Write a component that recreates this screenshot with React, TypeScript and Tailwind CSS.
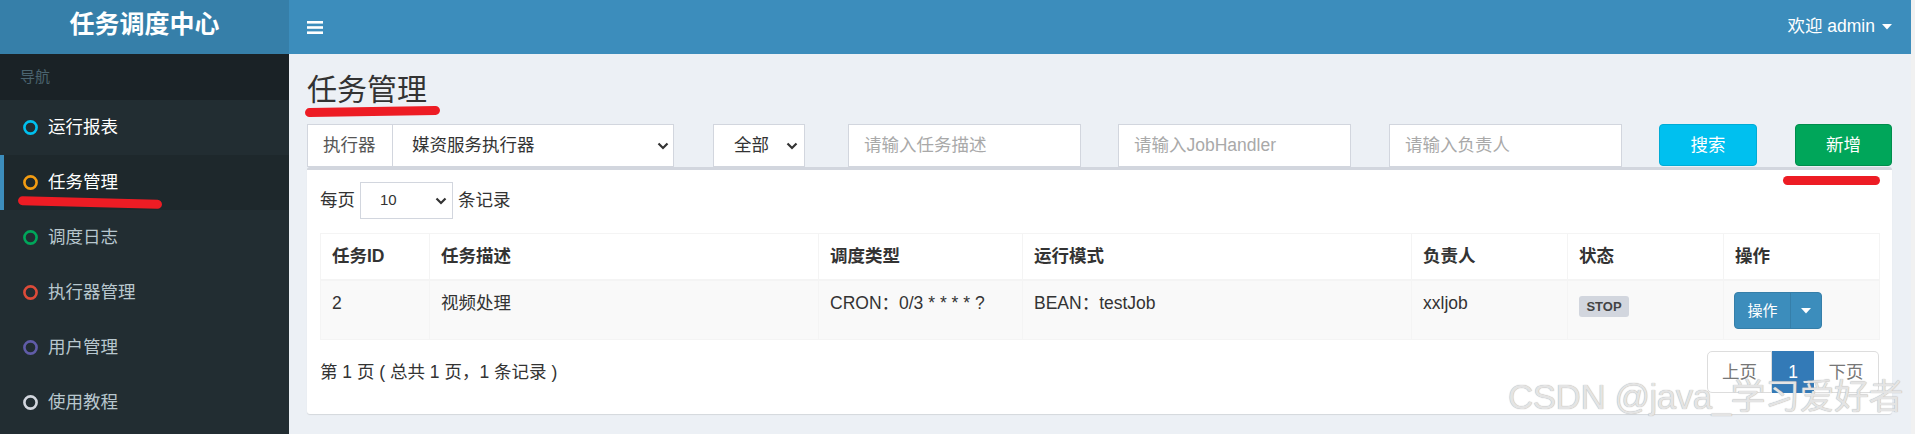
import React from "react";

const FONT = "font-['Liberation_Sans','Noto_Sans_CJK_SC',sans-serif]";

function Circle({ color }: { color: string }) {
  return (
    <svg width="15" height="15" viewBox="0 0 15 15" className="shrink-0">
      <circle cx="7.5" cy="7.5" r="6.1" fill="none" stroke={color} strokeWidth="2.6" />
    </svg>
  );
}

function Chevron() {
  return (
    <svg width="12" height="8" viewBox="0 0 12 8" className="shrink-0">
      <polyline points="1.5,1.5 6,6 10.5,1.5" fill="none" stroke="#333" strokeWidth="2.2" />
    </svg>
  );
}

const menu = [
  { label: "运行报表", color: "#00c0ef", text: "text-white", active: false },
  { label: "任务管理", color: "#f39c12", text: "text-white", active: true },
  { label: "调度日志", color: "#00a65a", text: "text-[#b8c7ce]", active: false },
  { label: "执行器管理", color: "#dd4b39", text: "text-[#b8c7ce]", active: false },
  { label: "用户管理", color: "#605ca8", text: "text-[#b8c7ce]", active: false },
  { label: "使用教程", color: "#d2d6de", text: "text-[#b8c7ce]", active: false },
];

export default function App() {
  return (
    <div className={`relative flex w-[1915px] h-[434px] overflow-hidden ${FONT}`}>
      {/* Sidebar */}
      <aside className="w-[289px] shrink-0 bg-[#222d32] flex flex-col">
        <div className="h-[54px] bg-[#367fa9] flex items-center justify-center pb-[5px] text-white font-bold text-[25px] leading-none">
          任务调度中心
        </div>
        <div className="h-[46px] bg-[#1a2226] text-[#4b646f] text-[15px] pl-[20px] flex items-center">
          导航
        </div>
        {menu.map((m) => (
          <div
            key={m.label}
            className={`h-[55px] flex items-center border-l-4 pl-[19px] ${
              m.active ? "border-[#3c8dbc] bg-[#1e282c]" : "border-transparent"
            }`}
          >
            <Circle color={m.color} />
            <span className={`ml-[10px] text-[17.5px] leading-none ${m.text}`}>{m.label}</span>
          </div>
        ))}
      </aside>

      {/* Main */}
      <div className="w-[1622px] shrink-0 flex flex-col bg-[#ecf0f5]">
        <header className="h-[54px] bg-[#3c8dbc] flex items-center justify-between pl-[18px] pr-[19px]">
          <svg width="16" height="13" viewBox="0 0 16 13">
            <rect x="0" y="0" width="16" height="2.6" fill="#fff" />
            <rect x="0" y="5.2" width="16" height="2.6" fill="#fff" />
            <rect x="0" y="10.4" width="16" height="2.6" fill="#fff" />
          </svg>
          <div className="flex items-center text-white text-[17.5px] leading-none">
            <span>欢迎 admin</span>
            <svg width="10" height="6" viewBox="0 0 10 6" className="ml-[7px]">
              <polygon points="0,0 10,0 5,5.5" fill="#fff" />
            </svg>
          </div>
        </header>

        <div className="pl-[18px] pr-[19px]">
          <h1 className="pt-[19px] text-[30px] leading-[33px] text-[#333] font-normal">任务管理</h1>

          {/* Filter row */}
          <div className="mt-[18px] h-[43px] flex text-[17.5px]">
            <div className="w-[367px] h-full flex">
              <div className="w-[85px] h-full bg-white border border-r-0 border-[#d2d6de] flex items-center pl-[15px] text-[#555]">
                执行器
              </div>
              <div className="flex-1 h-full bg-white border border-[#d2d6de] flex items-center justify-between pl-[19px] pr-[4px] text-[#333]">
                <span>媒资服务执行器</span>
                <Chevron />
              </div>
            </div>
            <div className="ml-[39px] w-[92px] h-full bg-white border border-[#d2d6de] flex items-center justify-between pl-[20px] pr-[6px] text-[#333]">
              <span>全部</span>
              <Chevron />
            </div>
            <div className="ml-[43px] w-[233px] h-full bg-white border border-[#d2d6de] flex items-center pl-[15px] text-[#a9a9a9]">
              请输入任务描述
            </div>
            <div className="ml-[37px] w-[233px] h-full bg-white border border-[#d2d6de] flex items-center pl-[15px] text-[#a9a9a9]">
              请输入JobHandler
            </div>
            <div className="ml-[38px] w-[233px] h-full bg-white border border-[#d2d6de] flex items-center pl-[15px] text-[#a9a9a9]">
              请输入负责人
            </div>
            <div className="ml-[37px] w-[98px] h-[42px] rounded-[4px] bg-[#00c0ef] border border-[#00acd6] flex items-center justify-center text-white">
              搜索
            </div>
            <div className="ml-[38px] w-[97px] h-[42px] rounded-[4px] bg-[#00a65a] border border-[#008d4c] flex items-center justify-center text-white">
              新增
            </div>
          </div>

          {/* Box */}
          <div className="bg-white border-t-[3px] border-[#d2d6de] rounded-[3px] shadow-[0_1px_1px_rgba(0,0,0,0.1)] px-[13px] pt-[12px] pb-[21px] text-[17.5px] text-[#333]">
            <div className="flex items-center h-[37px]">
              <span>每页</span>
              <div className="ml-[5px] w-[93px] h-[37px] border border-[#d2d6de] flex items-center justify-between pl-[19px] pr-[5px] text-[15px]">
                <span>10</span>
                <Chevron />
              </div>
              <span className="ml-[5px]">条记录</span>
            </div>

            <table className="mt-[14px] w-[1559px] table-fixed border-collapse border border-[#f4f4f4]">
              <colgroup>
                <col className="w-[109px]" />
                <col className="w-[389px]" />
                <col className="w-[204px]" />
                <col className="w-[389px]" />
                <col className="w-[156px]" />
                <col className="w-[156px]" />
                <col className="w-[156px]" />
              </colgroup>
              <thead>
                <tr className="bg-white">
                  {["任务ID", "任务描述", "调度类型", "运行模式", "负责人", "状态", "操作"].map((h) => (
                    <th
                      key={h}
                      className="border border-[#f4f4f4] border-b-2 text-left font-bold px-[11px] py-[10px] leading-[25px]"
                    >
                      {h}
                    </th>
                  ))}
                </tr>
              </thead>
              <tbody>
                <tr className="bg-[#f9f9f9]">
                  <td className="border border-[#f4f4f4] align-top px-[11px] py-[10px] leading-[25px]">2</td>
                  <td className="border border-[#f4f4f4] align-top px-[11px] py-[10px] leading-[25px]">视频处理</td>
                  <td className="border border-[#f4f4f4] align-top px-[11px] py-[10px] leading-[25px]">CRON：0/3 * * * * ?</td>
                  <td className="border border-[#f4f4f4] align-top px-[11px] py-[10px] leading-[25px]">BEAN：testJob</td>
                  <td className="border border-[#f4f4f4] align-top px-[11px] py-[10px] leading-[25px]">xxljob</td>
                  <td className="border border-[#f4f4f4] align-top px-[11px] py-[10px] leading-[25px]">
                    <span className="mt-[5px] inline-flex items-center justify-center w-[50px] h-[21px] rounded-[3px] bg-[#d2d6de] text-[#444] text-[13px] font-bold leading-none align-top">
                      STOP
                    </span>
                  </td>
                  <td className="border border-[#f4f4f4] align-top px-[10px] py-[10px] leading-[25px]">
                    <div className="mt-[1px] flex h-[37px] w-[88px] rounded-[4px] overflow-hidden border border-[#367fa9] bg-[#3c8dbc] text-white">
                      <div className="w-[55px] flex items-center justify-center text-[15px] leading-none">操作</div>
                      <div className="flex-1 border-l border-[#367fa9] flex items-center justify-center">
                        <svg width="10" height="6" viewBox="0 0 10 6">
                          <polygon points="0,0 10,0 5,5.5" fill="#fff" />
                        </svg>
                      </div>
                    </div>
                  </td>
                </tr>
              </tbody>
            </table>

            <div className="mt-[11px] flex items-center justify-between">
              <span className="leading-[25px]">第 1 页 ( 总共 1 页，1 条记录 )</span>
              <div className="flex h-[42px]">
                <div className="w-[65px] border border-[#ddd] rounded-l-[5px] flex items-center justify-center text-[#777]">上页</div>
                <div className="w-[42px] bg-[#337ab7] border border-[#337ab7] flex items-center justify-center text-white">1</div>
                <div className="w-[65px] border border-l-0 border-[#ddd] rounded-r-[5px] flex items-center justify-center text-[#777]">下页</div>
              </div>
            </div>
          </div>
        </div>
      </div>

      <div className="w-[4px] shrink-0 bg-[#f1f1f1]" />

      {/* Red annotation strokes */}
      <div className="absolute left-[305px] top-[107px] w-[135px] h-[9px] rounded-full bg-[#ed1c24] -rotate-1" />
      <div className="absolute left-[18px] top-[198px] w-[144px] h-[9px] rounded-full bg-[#ed1c24] rotate-[1.5deg]" />
      <div className="absolute left-[1783px] top-[176px] w-[97px] h-[9px] rounded-full bg-[#ed1c24]" />

      {/* Watermark */}
      <div className="absolute left-[1508px] top-[379px] text-[35px] leading-none text-[#e4e4e4] [text-shadow:0_0_1px_#9a9a9a] whitespace-nowrap tracking-[-0.5px]">
        CSDN @java_学习爱好者
      </div>
    </div>
  );
}
